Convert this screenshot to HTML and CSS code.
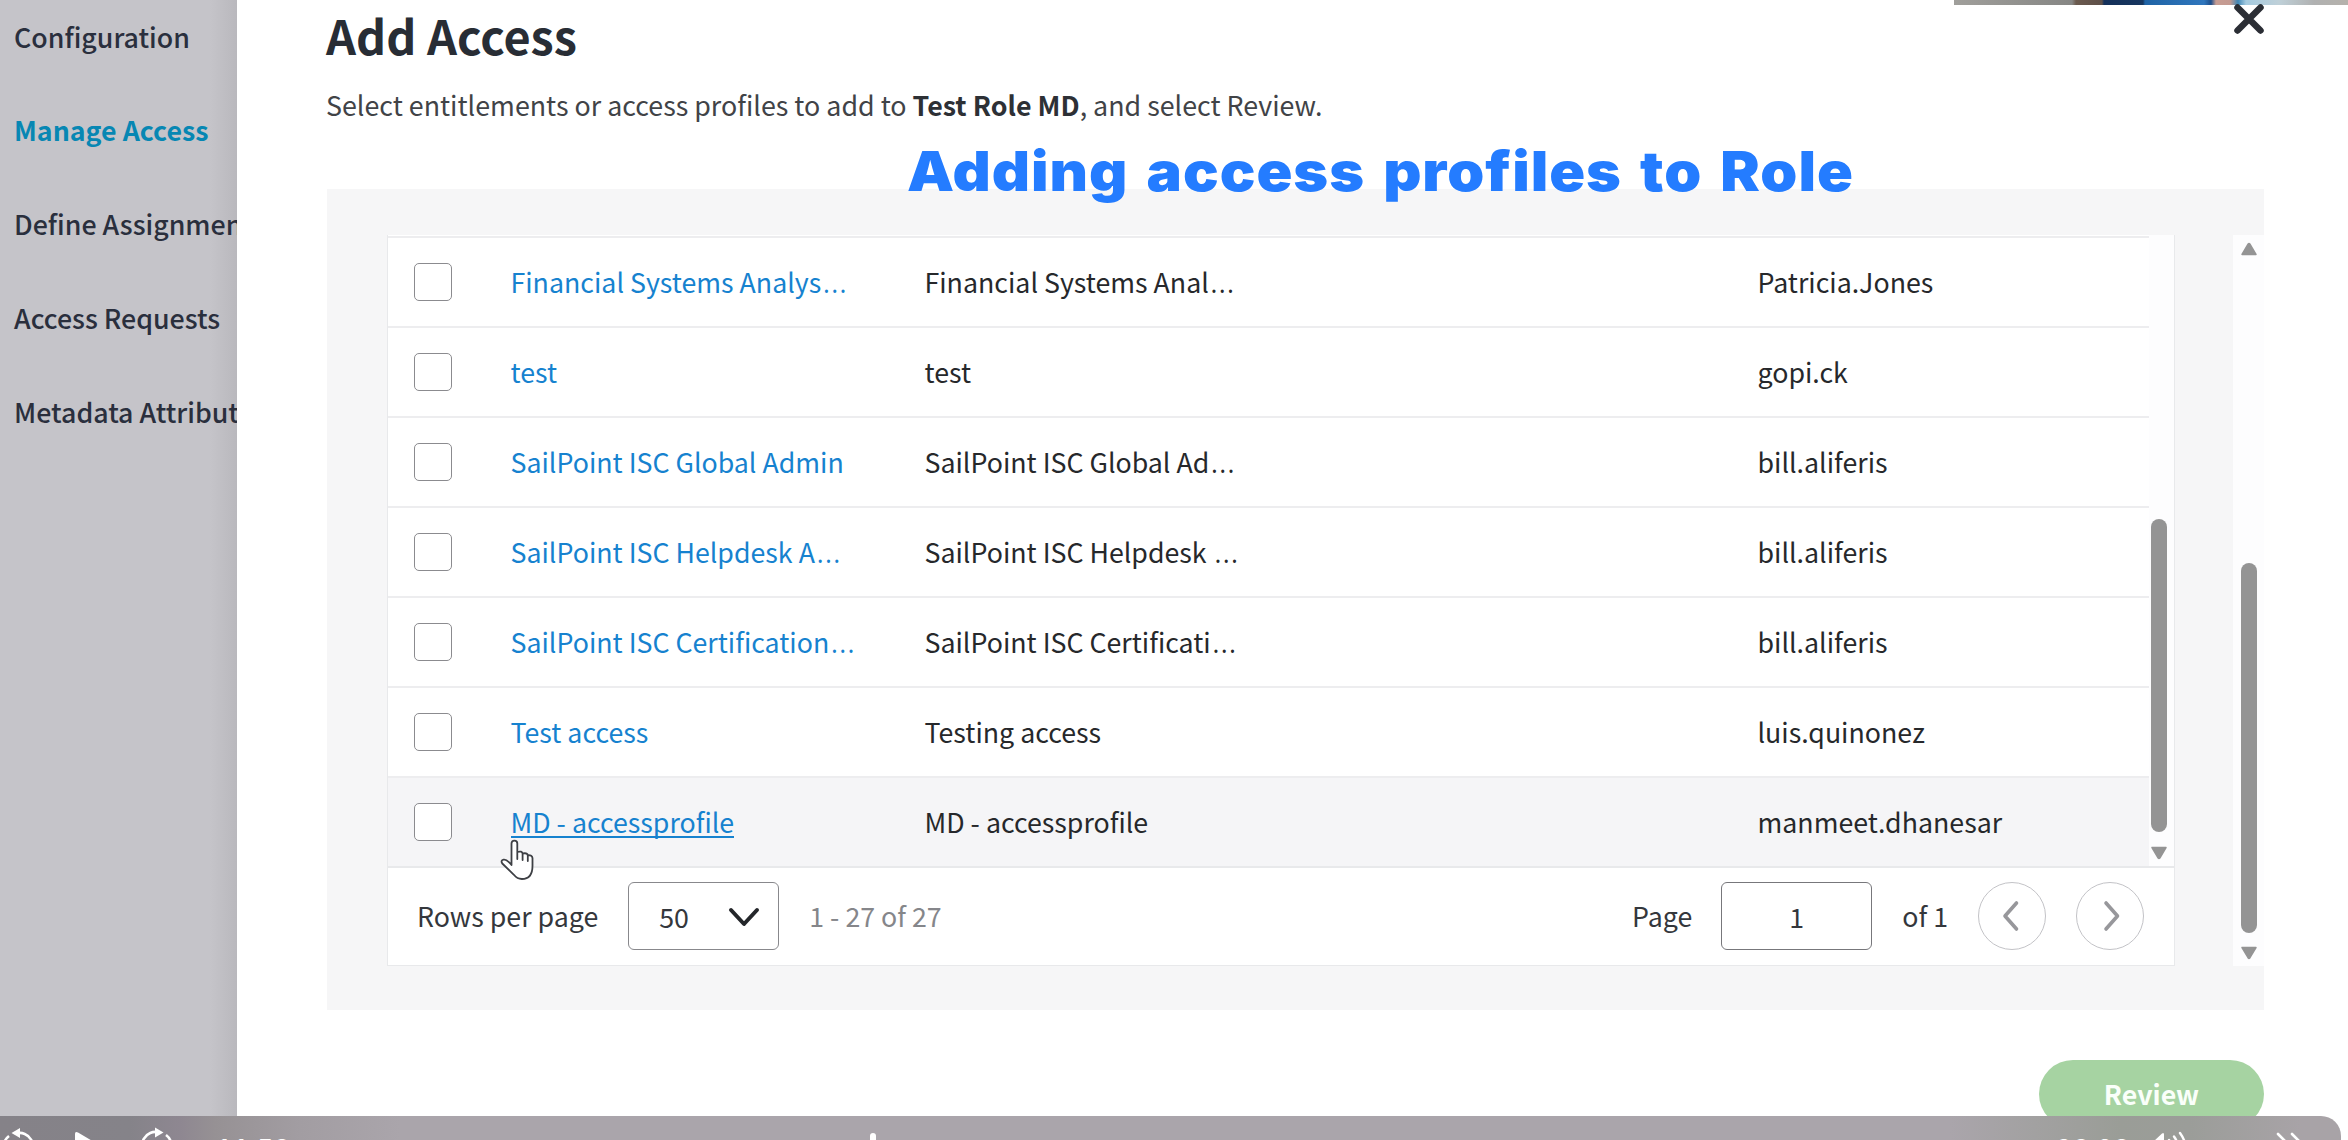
FILE: index.html
```html
<!DOCTYPE html>
<html lang="en">
<head>
<meta charset="utf-8">
<title>Add Access</title>
<link rel="stylesheet" href="styles.css">
</head>
<body>
<div class="app">
  <nav class="sidebar">
    <a class="nav-item">Configuration</a>
    <a class="nav-item nav-active">Manage Access</a>
    <a class="nav-item">Define Assignment</a>
    <a class="nav-item">Access Requests</a>
    <a class="nav-item">Metadata Attributes</a>
  </nav>
  <main class="drawer">
    <header class="head">
      <h1 class="title">Add Access</h1>
      <p class="subtitle">Select entitlements or access profiles to add to <b>Test Role MD</b>, and select Review.</p>
    </header>
    <section class="panel">
      <div class="table">
        <div class="table-body">
          <div class="rows">
            <div class="row"><span class="check"></span><a class="link">Financial Systems Analys<span class="dots">…</span></a><span>Financial Systems Anal<span class="dots">…</span></span><span>Patricia.Jones</span></div>
            <div class="row"><span class="check"></span><a class="link">test</a><span>test</span><span>gopi.ck</span></div>
            <div class="row"><span class="check"></span><a class="link">SailPoint ISC Global Admin</a><span>SailPoint ISC Global Ad<span class="dots">…</span></span><span>bill.aliferis</span></div>
            <div class="row"><span class="check"></span><a class="link">SailPoint ISC Helpdesk A<span class="dots">…</span></a><span>SailPoint ISC Helpdesk <span class="dots">…</span></span><span>bill.aliferis</span></div>
            <div class="row"><span class="check"></span><a class="link">SailPoint ISC Certification<span class="dots">…</span></a><span>SailPoint ISC Certificati<span class="dots">…</span></span><span>bill.aliferis</span></div>
            <div class="row"><span class="check"></span><a class="link">Test access</a><span>Testing access</span><span>luis.quinonez</span></div>
            <div class="row row-hover"><span class="check"></span><a class="link"><span class="underlined">MD - accessprofile</span></a><span>MD - accessprofile</span><span>manmeet.dhanesar</span></div>
          </div>
          <div class="inner-scroll">
            <div class="thumb inner-thumb"></div>
            <svg class="arrow" viewBox="0 0 18 14"><path d="M2 1.500h14L9.800 12q-.8 1-1.600 0z"/></svg>
          </div>
        </div>
        <footer class="pager">
          <span>Rows per page</span>
          <span class="select">50<svg width="32" height="22" viewBox="0 0 32 22"><path d="M3 4l13 14L29 4" fill="none" stroke="#24262a" stroke-width="4" stroke-linecap="round" stroke-linejoin="round"/></svg></span>
          <span class="range">1 - 27 of 27</span>
          <span class="page-label">Page</span>
          <span class="page-input">1</span>
          <span class="of">of 1</span>
          <span class="circle"><svg width="20" height="34" viewBox="0 0 20 34"><path d="M14.500 4L3 17l11.500 13" /></svg></span>
          <span class="circle circle-next"><svg width="20" height="34" viewBox="0 0 20 34"><path d="M6 4l11.500 13L6 30" /></svg></span>
        </footer>
      </div>
      <div class="outer-scroll">
        <svg class="arrow" viewBox="0 0 18 14"><path d="M2 12.500h14L9.800 2q-.8-1-1.600 0z"/></svg>
        <div class="thumb outer-thumb"></div>
        <svg class="arrow" viewBox="0 0 18 14"><path d="M2 1.500h14L9.800 12q-.8 1-1.600 0z"/></svg>
      </div>
    </section>
    <div class="actions"><span class="review">Review</span></div>
  </main>

  <div class="camera-strip"></div>
  <svg class="close" width="32" height="32" viewBox="0 0 32 32"><path d="M4.500 4.500l23 23M27.500 4.500l-23 23" stroke="#2b2e35" stroke-width="6.500" stroke-linecap="round"/></svg>
  <div class="caption">Adding access profiles to Role</div>
  <svg class="cursor" width="36" height="44" viewBox="0 0 36 44"><path d="M11.500 27V5.500q0-2.800 2.900-2.800t2.900 2.800V14q4.800-1.400 5.300 1.500 4.600-1 5.200 1.700 4.400-.4 4.700 3v7.500q0 13.300-10.600 13.300-4.700 0-8-4.200L2.300 25.500q-2-3.200 1.300-3.900 3-.6 7.900 5.400zM17.300 13.500V21M22.600 15.500V22M27.800 17V23" fill="#fff" stroke="#3e4045" stroke-width="1.800" stroke-linejoin="round" stroke-linecap="round"/></svg>

  <div class="player">
    <svg class="player-icon back" width="32" height="32" viewBox="0 0 32 32"><path d="M15 5.500A13 13 0 0 1 27 28M8 8A13 13 0 0 0 5 26" fill="none" stroke="#fff" stroke-width="2.600"/><path d="M10.500 5l8.500-5v10z" fill="#fff"/></svg>
    <svg class="player-icon play" width="30" height="34" viewBox="0 0 30 34"><path d="M2 3q0-3 3-1.500l22 13q2 1.500 0 3l-22 13q-3 1.500-3-1.500z" fill="#fff"/></svg>
    <svg class="player-icon forward" width="32" height="32" viewBox="0 0 32 32"><path d="M17 5.500A13 13 0 0 0 5 28M24 8A13 13 0 0 1 27 26" fill="none" stroke="#fff" stroke-width="2.600"/><path d="M21.500 5.500l-8.500-5v10z" fill="#fff"/></svg>
    <span class="time elapsed">11:58</span>
    <span class="playhead"></span>
    <span class="time remaining">-38:28</span>
    <svg class="player-icon sound" width="40" height="34" viewBox="0 0 40 34"><path d="M2 11h5L16 2.500q2-1.500 2 1V30q0 2-2 .5L7 22H2z" fill="#fff"/><path d="M23 9q5 8 0 16M28 5.500q8 11 0 22M34 2q11 15 0 29" fill="none" stroke="#fff" stroke-width="2.400" stroke-linecap="round"/></svg>
    <svg class="player-icon more" width="32" height="30" viewBox="0 0 32 30"><path d="M4 3l11 11L4 25M18 3l11 11-11 11" fill="none" stroke="#fff" stroke-width="2.600" stroke-linecap="round"/></svg>
  </div>
</div>
</body>
</html>
```
FILE: styles.css
```css
* { box-sizing: border-box; }
body {
  margin: 0;
  overflow: hidden;
  background: #fff;
  color: #26282b;
  font: 400 26.750px/40px "Noto Sans CJK SC", "Noto Sans", sans-serif;
}
.app {
  position: relative;
  display: flex;
  width: 2348px;
  height: 1140px;
  overflow: hidden;
}
.sidebar {
  flex: none;
  width: 237px;
  padding: 16.500px 0 0 14px;
  display: flex;
  flex-direction: column;
  gap: 53.800px;
  overflow: hidden;
  white-space: nowrap;
  font-weight: 500;
  color: #2a2f3d;
  background: linear-gradient(90deg, #c5c4c9 0, #c5c4c9 210px, #b9b8bd 237px);
}
.nav-active { font-weight: 700; color: #0787b3; }

.drawer {
  flex: 1;
  display: flex;
  flex-direction: column;
  padding-left: 90px;
}
.head { height: 189px; flex: none; margin-left: -1px; }
.title {
  margin: 0;
  padding-top: 5px;
  font-size: 46.800px;
  line-height: 60px;
  font-weight: 700;
  color: #282d35;
}
.subtitle { margin: 20px 0 0; font-size: 26.820px; color: #414347; }
.subtitle b { color: #2d3035; }

.panel {
  width: 1937px;
  height: 821px;
  flex: none;
  padding: 46px 0 44px 60px;
  display: flex;
  justify-content: space-between;
  background: #f6f6f7;
}
.table {
  width: 1788px;
  height: 731px;
  border: solid #e8e9eb;
  border-width: 0 1.500px 1.500px;
  background: #fff;
}
.table-body { display: flex; height: 631px; }
.rows { width: 1761px; padding-top: 1px; }
.row {
  display: grid;
  grid-template-columns: 96.500px 414px 833px 1fr;
  align-items: center;
  height: 90px;
  padding-left: 26px;
  border-top: 2px solid #ededef;
}
.row-hover { background: #f5f5f7; }
.check {
  width: 38px;
  height: 38px;
  border: 1.800px solid #8b8b8f;
  border-radius: 5px;
  background: #fff;
}
.link { color: #1682cf; }
.underlined { border-bottom: 2.500px solid #1682cf; line-height: 28px; display: inline-block; }
.dots { margin-left: 1px; font-family: "Noto Sans", sans-serif; font-weight: 300; font-size: 34px; line-height: 20px; }

.inner-scroll {
  flex: 1;
  display: flex;
  flex-direction: column;
  align-items: center;
  padding-top: 284px;
  background: #fdfdfe;
}
.thumb { width: 16px; border-radius: 8px; background: #949494; }
.inner-thumb { height: 313px; margin: 0 5px 14px 0; }
.arrow { width: 18px; height: 14px; fill: #949494; stroke: #949494; stroke-width: 1.500; stroke-linejoin: round; }
.inner-scroll .arrow { margin-right: 5px; }
.outer-scroll {
  width: 31px;
  display: flex;
  flex-direction: column;
  align-items: center;
  padding: 7px 0 6px;
  background: #fdfdfe;
}
.outer-thumb { margin: 307px 0 13px; height: 371px; }

.pager {
  display: flex;
  align-items: center;
  height: 97px;
  padding: 0 30px 0 29px;
  border-top: 2px solid #e8e9eb;
  color: #34373c;
}
.select {
  display: flex;
  align-items: center;
  justify-content: space-between;
  width: 151px;
  height: 68px;
  margin-left: 30px;
  padding: 2px 18px 0 30px;
  border: 1.800px solid #88888c;
  border-radius: 6px;
}
.range { margin-left: 30px; color: #85868a; }
.page-label { margin-left: auto; }
.page-input {
  width: 151px;
  height: 68px;
  margin-left: 29px;
  padding-top: 14px;
  text-align: center;
  border: 1.800px solid #77777b;
  border-radius: 6px;
}
.of { margin-left: 30px; }
.circle {
  display: flex;
  align-items: center;
  justify-content: center;
  width: 68px;
  height: 68px;
  margin-left: 30px;
  border: 1.500px solid #c3c3c7;
  border-radius: 50%;
}
.circle path { fill: none; stroke: #97979b; stroke-width: 3.600; stroke-linecap: round; stroke-linejoin: round; }

.actions {
  display: flex;
  justify-content: flex-end;
  width: 1937px;
  padding-top: 50px;
}
.review {
  width: 225px;
  height: 68px;
  border-radius: 34px;
  text-align: center;
  line-height: 67px;
  font-weight: 700;
  color: #fafffa;
  background: #a6d3a2;
}

.camera-strip {
  position: absolute;
  left: 1954px;
  top: 0;
  right: 0;
  height: 4.500px;
  background: linear-gradient(90deg, #a09f9b 0, #868684 118px, #6b5a4e 122px, #5d4f48 148px, #14305a 150px, #17365f 189px, #1f63a5 191px, #2f76bd 250px, #1d4d8a 257px, #c79d93 262px, #c49a91 276px, #3f86b5 284px, #a5cbe0 292px, #bfd0d8 325px, #b0b1b1 360px, #b5b1ab 394px);
}
.close { position: absolute; left: 2233px; top: 3px; }
.caption {
  position: absolute;
  left: 907px;
  top: 141px;
  font: 900 55px/60px Inter, "Liberation Sans", sans-serif;
  letter-spacing: .9px;
  word-spacing: 5px;
  white-space: nowrap;
  color: #247cff;
  transform: scaleX(1.078);
  transform-origin: 0 0;
}
.cursor { position: absolute; left: 500px; top: 838px; }

.player {
  position: absolute;
  left: 0;
  top: 1116px;
  width: 2341px;
  height: 60px;
  border-radius: 0 20px 0 0;
  background: linear-gradient(90deg, #858288 0, #858389 130px, #8e8791 180px, #969194 215px, #a29da2 300px, #aaa5ab 400px, #aaa5ab 1950px, #9a9d97 2120px, #9b9d99 2190px, #a8a3a7 2300px);
}
.player-icon, .time, .playhead { position: absolute; }
.back { left: 1px; top: 12px; }
.play { left: 73px; top: 15px; }
.forward { left: 142px; top: 11px; }
.time { top: 13px; color: #fff; font: 500 26px/40px Inter, "Liberation Sans", sans-serif; font-variant-numeric: tabular-nums; }
.elapsed { left: 216px; }
.remaining { left: 2039px; }
.playhead { left: 870px; top: 17px; width: 6px; height: 40px; border-radius: 3px; background: #fff; }
.sound { left: 2146px; top: 15px; }
.more { left: 2274px; top: 15px; }
```
